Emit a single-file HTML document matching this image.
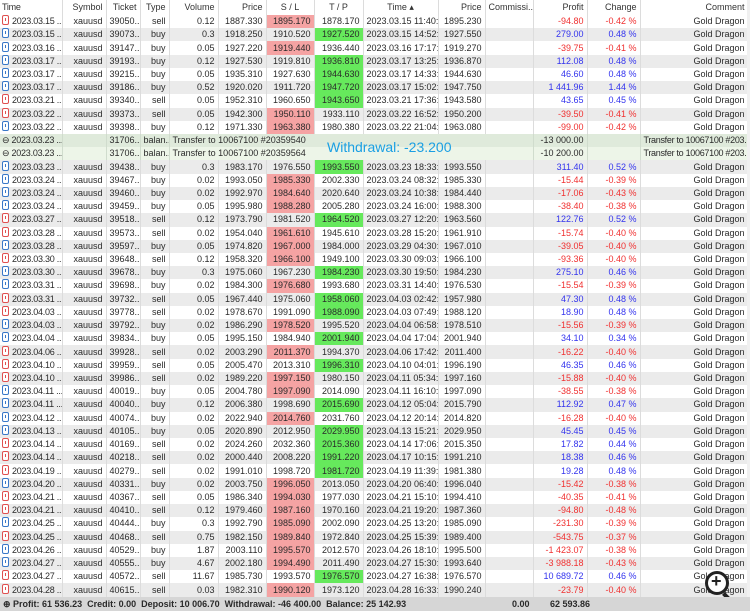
<!DOCTYPE html>
<html><head><meta charset="utf-8"><style>
body{margin:0;width:750px;height:611px;overflow:hidden;background:#fff;font-family:"Liberation Sans",sans-serif;font-size:9px;color:#2a2a2a;position:relative}
table{border-collapse:collapse;table-layout:fixed;width:748px;position:absolute;left:0;top:0}
td,th{height:13.23px;padding:0 3px;white-space:nowrap;overflow:hidden;text-overflow:clip;text-align:right;border-right:1px solid #dcdcdc;font-weight:normal;line-height:13px}
th{height:15px;color:#333;background:#fff}
td:first-child,th:first-child{text-align:left;padding-left:2px;padding-right:0;letter-spacing:-0.25px}
tbody tr:nth-child(even){background:#ebebeb}
td.r{background:#f5a3a3}
td.g{background:#66e95c}
.p{color:#3333ee}.n{color:#f03030}
i{display:inline-block;width:5px;height:8px;border:1px solid #e05050;border-radius:2px;vertical-align:-1px;margin-right:3px;position:relative;background:#fff}
i.b{border-color:#3a78c8}
i:after{content:"";position:absolute;left:2px;top:2px;width:0;height:3px;border-left:1px solid #e05050}
i.b:after{border-left-color:#3a78c8}
tr.w1{background:#dfeadb!important}tr.w2{background:#edf5e8!important}
tr.w1 td,tr.w2 td{border-right-color:#d0dccd}
tr.w1 td:last-child,tr.w2 td:last-child{letter-spacing:-0.3px}
.t{text-align:left!important}
#foot{position:absolute;left:0;top:597px;width:750px;height:14px;background:#d6d6d6;font-weight:bold;font-size:9px;line-height:14px}
#wd{position:absolute;left:327px;top:139px;color:#1a9fe3;font-size:14px}
#mag{position:absolute;left:705px;top:571px;width:18px;height:18px;border:3px solid #222;border-radius:50%;background:#fff}
#mag:before{content:"+";position:absolute;left:3px;top:-3px;font-size:18px;font-weight:bold;color:#222}
#mag:after{content:"";position:absolute;left:17px;top:18px;width:4px;height:10px;background:#222;transform:rotate(-45deg)}
#sb{position:absolute;right:0;top:0;width:3px;height:597px;background:#f0f0f0}
</style></head><body>
<table>
<colgroup><col style="width:62px"><col style="width:44px"><col style="width:34px"><col style="width:29px"><col style="width:49px"><col style="width:48px"><col style="width:48px"><col style="width:49px"><col style="width:75px"><col style="width:47px"><col style="width:48px"><col style="width:54px"><col style="width:53px"><col style="width:108px"></colgroup>
<thead><tr><th>Time</th><th>Symbol</th><th>Ticket</th><th>Type</th><th>Volume</th><th>Price</th><th style="text-align:center">S / L</th><th style="text-align:center">T / P</th><th style="text-align:center">Time &#9652;</th><th>Price</th><th style="text-align:left">Commissi...</th><th>Profit</th><th>Change</th><th>Comment</th></tr></thead>
<tbody>
<tr><td><i></i>2023.03.15 ...</td><td>xauusd</td><td>39050...</td><td>sell</td><td>0.12</td><td>1887.330</td><td class=r>1895.170</td><td>1878.170</td><td class=t>2023.03.15 11:40:...</td><td>1895.230</td><td></td><td class=n>-94.80</td><td class=n>-0.42 %</td><td>Gold Dragon</td></tr>
<tr><td><i class=b></i>2023.03.15 ...</td><td>xauusd</td><td>39073...</td><td>buy</td><td>0.3</td><td>1918.250</td><td>1910.520</td><td class=g>1927.520</td><td class=t>2023.03.15 14:52:...</td><td>1927.550</td><td></td><td class=p>279.00</td><td class=p>0.48 %</td><td>Gold Dragon</td></tr>
<tr><td><i class=b></i>2023.03.16 ...</td><td>xauusd</td><td>39147...</td><td>buy</td><td>0.05</td><td>1927.220</td><td class=r>1919.440</td><td>1936.440</td><td class=t>2023.03.16 17:17:...</td><td>1919.270</td><td></td><td class=n>-39.75</td><td class=n>-0.41 %</td><td>Gold Dragon</td></tr>
<tr><td><i class=b></i>2023.03.17 ...</td><td>xauusd</td><td>39193...</td><td>buy</td><td>0.12</td><td>1927.530</td><td>1919.810</td><td class=g>1936.810</td><td class=t>2023.03.17 13:25:...</td><td>1936.870</td><td></td><td class=p>112.08</td><td class=p>0.48 %</td><td>Gold Dragon</td></tr>
<tr><td><i class=b></i>2023.03.17 ...</td><td>xauusd</td><td>39215...</td><td>buy</td><td>0.05</td><td>1935.310</td><td>1927.630</td><td class=g>1944.630</td><td class=t>2023.03.17 14:33:...</td><td>1944.630</td><td></td><td class=p>46.60</td><td class=p>0.48 %</td><td>Gold Dragon</td></tr>
<tr><td><i class=b></i>2023.03.17 ...</td><td>xauusd</td><td>39186...</td><td>buy</td><td>0.52</td><td>1920.020</td><td>1911.720</td><td class=g>1947.720</td><td class=t>2023.03.17 15:02:...</td><td>1947.750</td><td></td><td class=p>1 441.96</td><td class=p>1.44 %</td><td>Gold Dragon</td></tr>
<tr><td><i></i>2023.03.21 ...</td><td>xauusd</td><td>39340...</td><td>sell</td><td>0.05</td><td>1952.310</td><td>1960.650</td><td class=g>1943.650</td><td class=t>2023.03.21 17:36:...</td><td>1943.580</td><td></td><td class=p>43.65</td><td class=p>0.45 %</td><td>Gold Dragon</td></tr>
<tr><td><i></i>2023.03.22 ...</td><td>xauusd</td><td>39373...</td><td>sell</td><td>0.05</td><td>1942.300</td><td class=r>1950.110</td><td>1933.110</td><td class=t>2023.03.22 16:52:...</td><td>1950.200</td><td></td><td class=n>-39.50</td><td class=n>-0.41 %</td><td>Gold Dragon</td></tr>
<tr><td><i class=b></i>2023.03.22 ...</td><td>xauusd</td><td>39398...</td><td>buy</td><td>0.12</td><td>1971.330</td><td class=r>1963.380</td><td>1980.380</td><td class=t>2023.03.22 21:04:...</td><td>1963.080</td><td></td><td class=n>-99.00</td><td class=n>-0.42 %</td><td>Gold Dragon</td></tr>
<tr class=w1><td>&#8854; 2023.03.23 ...</td><td></td><td>31706...</td><td>balan...</td><td colspan=7 class=t>Transfer to 10067100 #20359540</td><td>-13 000.00</td><td></td><td>Transfer to 10067100 #203...</td></tr>
<tr class=w2><td>&#8854; 2023.03.23 ...</td><td></td><td>31706...</td><td>balan...</td><td colspan=7 class=t>Transfer to 10067100 #20359564</td><td>-10 200.00</td><td></td><td>Transfer to 10067100 #203...</td></tr>
<tr><td><i class=b></i>2023.03.23 ...</td><td>xauusd</td><td>39438...</td><td>buy</td><td>0.3</td><td>1983.170</td><td>1976.550</td><td class=g>1993.550</td><td class=t>2023.03.23 18:33:...</td><td>1993.550</td><td></td><td class=p>311.40</td><td class=p>0.52 %</td><td>Gold Dragon</td></tr>
<tr><td><i class=b></i>2023.03.24 ...</td><td>xauusd</td><td>39467...</td><td>buy</td><td>0.02</td><td>1993.050</td><td class=r>1985.330</td><td>2002.330</td><td class=t>2023.03.24 08:32:...</td><td>1985.330</td><td></td><td class=n>-15.44</td><td class=n>-0.39 %</td><td>Gold Dragon</td></tr>
<tr><td><i class=b></i>2023.03.24 ...</td><td>xauusd</td><td>39460...</td><td>buy</td><td>0.02</td><td>1992.970</td><td class=r>1984.640</td><td>2020.640</td><td class=t>2023.03.24 10:38:...</td><td>1984.440</td><td></td><td class=n>-17.06</td><td class=n>-0.43 %</td><td>Gold Dragon</td></tr>
<tr><td><i class=b></i>2023.03.24 ...</td><td>xauusd</td><td>39459...</td><td>buy</td><td>0.05</td><td>1995.980</td><td class=r>1988.280</td><td>2005.280</td><td class=t>2023.03.24 16:00:...</td><td>1988.300</td><td></td><td class=n>-38.40</td><td class=n>-0.38 %</td><td>Gold Dragon</td></tr>
<tr><td><i></i>2023.03.27 ...</td><td>xauusd</td><td>39518...</td><td>sell</td><td>0.12</td><td>1973.790</td><td>1981.520</td><td class=g>1964.520</td><td class=t>2023.03.27 12:20:...</td><td>1963.560</td><td></td><td class=p>122.76</td><td class=p>0.52 %</td><td>Gold Dragon</td></tr>
<tr><td><i></i>2023.03.28 ...</td><td>xauusd</td><td>39573...</td><td>sell</td><td>0.02</td><td>1954.040</td><td class=r>1961.610</td><td>1945.610</td><td class=t>2023.03.28 15:20:...</td><td>1961.910</td><td></td><td class=n>-15.74</td><td class=n>-0.40 %</td><td>Gold Dragon</td></tr>
<tr><td><i class=b></i>2023.03.28 ...</td><td>xauusd</td><td>39597...</td><td>buy</td><td>0.05</td><td>1974.820</td><td class=r>1967.000</td><td>1984.000</td><td class=t>2023.03.29 04:30:...</td><td>1967.010</td><td></td><td class=n>-39.05</td><td class=n>-0.40 %</td><td>Gold Dragon</td></tr>
<tr><td><i></i>2023.03.30 ...</td><td>xauusd</td><td>39648...</td><td>sell</td><td>0.12</td><td>1958.320</td><td class=r>1966.100</td><td>1949.100</td><td class=t>2023.03.30 09:03:...</td><td>1966.100</td><td></td><td class=n>-93.36</td><td class=n>-0.40 %</td><td>Gold Dragon</td></tr>
<tr><td><i class=b></i>2023.03.30 ...</td><td>xauusd</td><td>39678...</td><td>buy</td><td>0.3</td><td>1975.060</td><td>1967.230</td><td class=g>1984.230</td><td class=t>2023.03.30 19:50:...</td><td>1984.230</td><td></td><td class=p>275.10</td><td class=p>0.46 %</td><td>Gold Dragon</td></tr>
<tr><td><i class=b></i>2023.03.31 ...</td><td>xauusd</td><td>39698...</td><td>buy</td><td>0.02</td><td>1984.300</td><td class=r>1976.680</td><td>1993.680</td><td class=t>2023.03.31 14:40:...</td><td>1976.530</td><td></td><td class=n>-15.54</td><td class=n>-0.39 %</td><td>Gold Dragon</td></tr>
<tr><td><i></i>2023.03.31 ...</td><td>xauusd</td><td>39732...</td><td>sell</td><td>0.05</td><td>1967.440</td><td>1975.060</td><td class=g>1958.060</td><td class=t>2023.04.03 02:42:...</td><td>1957.980</td><td></td><td class=p>47.30</td><td class=p>0.48 %</td><td>Gold Dragon</td></tr>
<tr><td><i></i>2023.04.03 ...</td><td>xauusd</td><td>39778...</td><td>sell</td><td>0.02</td><td>1978.670</td><td>1991.090</td><td class=g>1988.090</td><td class=t>2023.04.03 07:49:...</td><td>1988.120</td><td></td><td class=p>18.90</td><td class=p>0.48 %</td><td>Gold Dragon</td></tr>
<tr><td><i class=b></i>2023.04.03 ...</td><td>xauusd</td><td>39792...</td><td>buy</td><td>0.02</td><td>1986.290</td><td class=r>1978.520</td><td>1995.520</td><td class=t>2023.04.04 06:58:...</td><td>1978.510</td><td></td><td class=n>-15.56</td><td class=n>-0.39 %</td><td>Gold Dragon</td></tr>
<tr><td><i class=b></i>2023.04.04 ...</td><td>xauusd</td><td>39834...</td><td>buy</td><td>0.05</td><td>1995.150</td><td>1984.940</td><td class=g>2001.940</td><td class=t>2023.04.04 17:04:...</td><td>2001.940</td><td></td><td class=p>34.10</td><td class=p>0.34 %</td><td>Gold Dragon</td></tr>
<tr><td><i></i>2023.04.06 ...</td><td>xauusd</td><td>39928...</td><td>sell</td><td>0.02</td><td>2003.290</td><td class=r>2011.370</td><td>1994.370</td><td class=t>2023.04.06 17:42:...</td><td>2011.400</td><td></td><td class=n>-16.22</td><td class=n>-0.40 %</td><td>Gold Dragon</td></tr>
<tr><td><i></i>2023.04.10 ...</td><td>xauusd</td><td>39959...</td><td>sell</td><td>0.05</td><td>2005.470</td><td>2013.310</td><td class=g>1996.310</td><td class=t>2023.04.10 04:01:...</td><td>1996.190</td><td></td><td class=p>46.35</td><td class=p>0.46 %</td><td>Gold Dragon</td></tr>
<tr><td><i></i>2023.04.10 ...</td><td>xauusd</td><td>39986...</td><td>sell</td><td>0.02</td><td>1989.220</td><td class=r>1997.150</td><td>1980.150</td><td class=t>2023.04.11 05:34:...</td><td>1997.160</td><td></td><td class=n>-15.88</td><td class=n>-0.40 %</td><td>Gold Dragon</td></tr>
<tr><td><i class=b></i>2023.04.11 ...</td><td>xauusd</td><td>40019...</td><td>buy</td><td>0.05</td><td>2004.780</td><td class=r>1997.090</td><td>2014.090</td><td class=t>2023.04.11 16:10:...</td><td>1997.090</td><td></td><td class=n>-38.55</td><td class=n>-0.38 %</td><td>Gold Dragon</td></tr>
<tr><td><i class=b></i>2023.04.11 ...</td><td>xauusd</td><td>40040...</td><td>buy</td><td>0.12</td><td>2006.380</td><td>1998.690</td><td class=g>2015.690</td><td class=t>2023.04.12 05:04:...</td><td>2015.790</td><td></td><td class=p>112.92</td><td class=p>0.47 %</td><td>Gold Dragon</td></tr>
<tr><td><i class=b></i>2023.04.12 ...</td><td>xauusd</td><td>40074...</td><td>buy</td><td>0.02</td><td>2022.940</td><td class=r>2014.760</td><td>2031.760</td><td class=t>2023.04.12 20:14:...</td><td>2014.820</td><td></td><td class=n>-16.28</td><td class=n>-0.40 %</td><td>Gold Dragon</td></tr>
<tr><td><i class=b></i>2023.04.13 ...</td><td>xauusd</td><td>40105...</td><td>buy</td><td>0.05</td><td>2020.890</td><td>2012.950</td><td class=g>2029.950</td><td class=t>2023.04.13 15:21:...</td><td>2029.950</td><td></td><td class=p>45.45</td><td class=p>0.45 %</td><td>Gold Dragon</td></tr>
<tr><td><i></i>2023.04.14 ...</td><td>xauusd</td><td>40169...</td><td>sell</td><td>0.02</td><td>2024.260</td><td>2032.360</td><td class=g>2015.360</td><td class=t>2023.04.14 17:06:...</td><td>2015.350</td><td></td><td class=p>17.82</td><td class=p>0.44 %</td><td>Gold Dragon</td></tr>
<tr><td><i></i>2023.04.14 ...</td><td>xauusd</td><td>40218...</td><td>sell</td><td>0.02</td><td>2000.440</td><td>2008.220</td><td class=g>1991.220</td><td class=t>2023.04.17 10:15:...</td><td>1991.210</td><td></td><td class=p>18.38</td><td class=p>0.46 %</td><td>Gold Dragon</td></tr>
<tr><td><i></i>2023.04.19 ...</td><td>xauusd</td><td>40279...</td><td>sell</td><td>0.02</td><td>1991.010</td><td>1998.720</td><td class=g>1981.720</td><td class=t>2023.04.19 11:39:...</td><td>1981.380</td><td></td><td class=p>19.28</td><td class=p>0.48 %</td><td>Gold Dragon</td></tr>
<tr><td><i class=b></i>2023.04.20 ...</td><td>xauusd</td><td>40331...</td><td>buy</td><td>0.02</td><td>2003.750</td><td class=r>1996.050</td><td>2013.050</td><td class=t>2023.04.20 06:40:...</td><td>1996.040</td><td></td><td class=n>-15.42</td><td class=n>-0.38 %</td><td>Gold Dragon</td></tr>
<tr><td><i></i>2023.04.21 ...</td><td>xauusd</td><td>40367...</td><td>sell</td><td>0.05</td><td>1986.340</td><td class=r>1994.030</td><td>1977.030</td><td class=t>2023.04.21 15:10:...</td><td>1994.410</td><td></td><td class=n>-40.35</td><td class=n>-0.41 %</td><td>Gold Dragon</td></tr>
<tr><td><i></i>2023.04.21 ...</td><td>xauusd</td><td>40410...</td><td>sell</td><td>0.12</td><td>1979.460</td><td class=r>1987.160</td><td>1970.160</td><td class=t>2023.04.21 19:20:...</td><td>1987.360</td><td></td><td class=n>-94.80</td><td class=n>-0.48 %</td><td>Gold Dragon</td></tr>
<tr><td><i class=b></i>2023.04.25 ...</td><td>xauusd</td><td>40444...</td><td>buy</td><td>0.3</td><td>1992.790</td><td class=r>1985.090</td><td>2002.090</td><td class=t>2023.04.25 13:20:...</td><td>1985.090</td><td></td><td class=n>-231.30</td><td class=n>-0.39 %</td><td>Gold Dragon</td></tr>
<tr><td><i></i>2023.04.25 ...</td><td>xauusd</td><td>40468...</td><td>sell</td><td>0.75</td><td>1982.150</td><td class=r>1989.840</td><td>1972.840</td><td class=t>2023.04.25 15:39:...</td><td>1989.400</td><td></td><td class=n>-543.75</td><td class=n>-0.37 %</td><td>Gold Dragon</td></tr>
<tr><td><i class=b></i>2023.04.26 ...</td><td>xauusd</td><td>40529...</td><td>buy</td><td>1.87</td><td>2003.110</td><td class=r>1995.570</td><td>2012.570</td><td class=t>2023.04.26 18:10:...</td><td>1995.500</td><td></td><td class=n>-1 423.07</td><td class=n>-0.38 %</td><td>Gold Dragon</td></tr>
<tr><td><i class=b></i>2023.04.27 ...</td><td>xauusd</td><td>40555...</td><td>buy</td><td>4.67</td><td>2002.180</td><td class=r>1994.490</td><td>2011.490</td><td class=t>2023.04.27 15:30:...</td><td>1993.640</td><td></td><td class=n>-3 988.18</td><td class=n>-0.43 %</td><td>Gold Dragon</td></tr>
<tr><td><i></i>2023.04.27 ...</td><td>xauusd</td><td>40572...</td><td>sell</td><td>11.67</td><td>1985.730</td><td>1993.570</td><td class=g>1976.570</td><td class=t>2023.04.27 16:38:...</td><td>1976.570</td><td></td><td class=p>10 689.72</td><td class=p>0.46 %</td><td>Gold Dragon</td></tr>
<tr><td><i></i>2023.04.28 ...</td><td>xauusd</td><td>40615...</td><td>sell</td><td>0.03</td><td>1982.310</td><td class=r>1990.120</td><td>1973.120</td><td class=t>2023.04.28 16:33:...</td><td>1990.240</td><td></td><td class=n>-23.79</td><td class=n>-0.40 %</td><td>Gold Dragon</td></tr>
</tbody></table>
<div id="wd">Withdrawal: -23.200</div>
<div id="sb"></div>
<div id="mag"></div>
<div id="foot"><span style="position:absolute;left:3px">&#8853; Profit: 61 536.23&nbsp; Credit: 0.00&nbsp; Deposit: 10 006.70&nbsp; Withdrawal: -46 400.00&nbsp; Balance: 25 142.93</span><span style="position:absolute;left:512px">0.00</span><span style="position:absolute;left:550px">62 593.86</span></div>
</body></html>
